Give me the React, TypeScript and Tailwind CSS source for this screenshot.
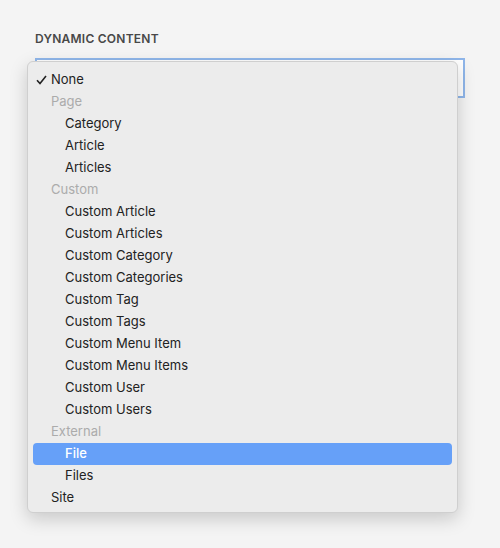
const rows: { label: string; kind: "item" | "group" | "sub"; checked?: boolean; active?: boolean }[] = [
  { label: "None", kind: "item", checked: true },
  { label: "Page", kind: "group" },
  { label: "Category", kind: "sub" },
  { label: "Article", kind: "sub" },
  { label: "Articles", kind: "sub" },
  { label: "Custom", kind: "group" },
  { label: "Custom Article", kind: "sub" },
  { label: "Custom Articles", kind: "sub" },
  { label: "Custom Category", kind: "sub" },
  { label: "Custom Categories", kind: "sub" },
  { label: "Custom Tag", kind: "sub" },
  { label: "Custom Tags", kind: "sub" },
  { label: "Custom Menu Item", kind: "sub" },
  { label: "Custom Menu Items", kind: "sub" },
  { label: "Custom User", kind: "sub" },
  { label: "Custom Users", kind: "sub" },
  { label: "External", kind: "group" },
  { label: "File", kind: "sub", active: true },
  { label: "Files", kind: "sub" },
  { label: "Site", kind: "item" },
];

export default function App() {
  return (
    <div className="w-[500px] h-[548px] bg-[#f4f4f4] pt-[32px] pl-[35px] font-['Inter',sans-serif]">
      <div className="text-[12px] font-semibold tracking-[0.02em] text-[#484848] leading-[14px]">
        DYNAMIC CONTENT
      </div>
      <div className="relative mt-[12px] w-[430px] h-[40px] border-2 border-[#8fb6ea] bg-white">
        <div className="absolute left-[-10px] top-[1px] w-[431px] rounded-[6px] border border-[#cfcfcf] bg-[#ececec] px-[5px] pt-[7px] pb-[3px] shadow-[0_6px_18px_rgba(0,0,0,0.18)]">
          {rows.map((r) => (
            <div
              key={r.label}
              className={`relative flex h-[22px] items-center rounded-[4px] text-[13px] ${
                r.active ? "bg-[#66a0f8] text-white font-medium" : r.kind === "group" ? "text-[#ababab]" : "text-[#222]"
              } ${r.kind === "sub" ? "pl-[32px]" : "pl-[18px]"}`}
            >
              {r.checked && (
                <svg className="absolute left-[3px] top-[6px]" width="11" height="10" viewBox="0 0 11 10">
                  <path d="M1 5.2 L4 8.5 L10 1" fill="none" stroke="#222" strokeWidth="1.6" />
                </svg>
              )}
              {r.label}
            </div>
          ))}
        </div>
      </div>
    </div>
  );
}
